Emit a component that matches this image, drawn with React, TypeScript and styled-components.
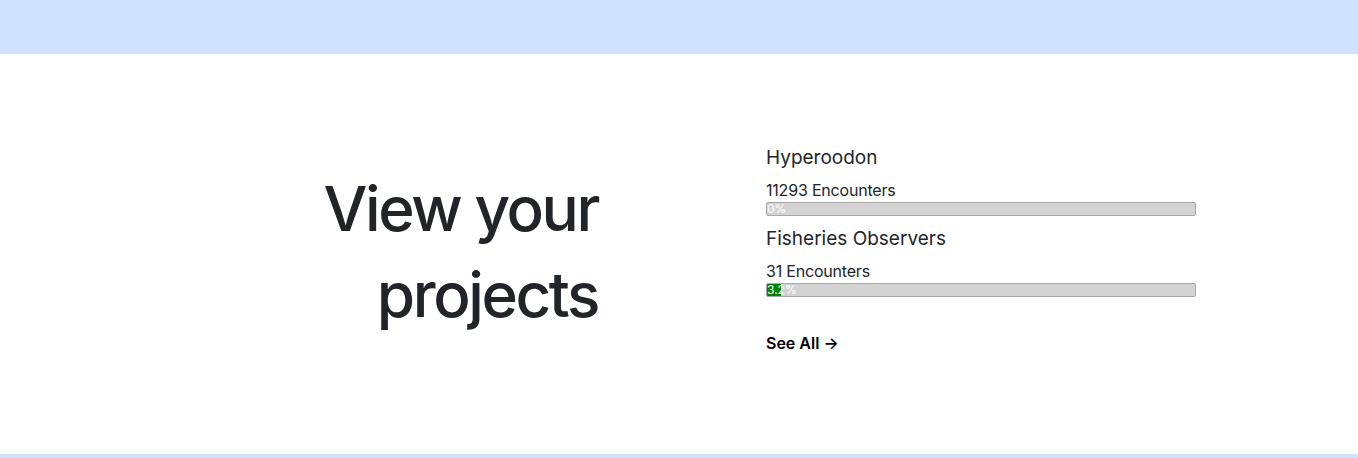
import React from 'react';
import styled, { createGlobalStyle } from 'styled-components';

const GlobalStyle = createGlobalStyle`
  * { box-sizing: border-box; }
  body {
    margin: 0;
    font-family: Inter, "Noto Sans", "Liberation Sans", sans-serif;
    color: #212529;
    background: #fff;
  }
`;

const TopBar = styled.div`
  height: 54px;
  background-color: #cfe2ff;
`;

const Hero = styled.section`
  height: 400px;
  display: flex;
  align-items: center;
`;

const HeroLeft = styled.div`
  width: 598px;
  text-align: right;
`;

const HeroTitle = styled.h1`
  margin: 0 0 4px 0;
  font-size: 62px;
  font-weight: 500;
  line-height: 86px;
  letter-spacing: -2.4px;
`;

const HeroRight = styled.div`
  margin-left: 168px;
  margin-bottom: 8px;
  width: 430px;
  display: flex;
  flex-direction: column;
`;

const ProjectName = styled.h5`
  margin: 0 0 8px 0;
  font-size: 19px;
  font-weight: 400;
  line-height: 24px;
`;

const Count = styled.div`
  font-size: 16px;
  line-height: 24px;
  letter-spacing: -0.2px;
`;

const Bar = styled.div`
  position: relative;
  height: 14px;
  margin-bottom: 11px;
  background-color: #d3d3d3;
  border: 1px solid #a8a8a8;
  border-radius: 2px;
  overflow: hidden;
`;

const Fill = styled.div`
  height: 100%;
  background-color: #008000;
`;

const BarLabel = styled.span`
  position: absolute;
  left: 0;
  top: -1px;
  font-size: 12px;
  line-height: 14px;
  color: #fff;
`;

const SeeAll = styled.a`
  margin-top: 23px;
  font-size: 16px;
  line-height: 24px;
  font-weight: 600;
  color: #000;
  text-decoration: none;
`;

const BottomBar = styled.div`
  height: 4px;
  background-color: #cfe2ff;
`;

const projects = [
  { name: 'Hyperoodon', count: 11293, pct: 0 },
  { name: 'Fisheries Observers', count: 31, pct: 3.2 },
];

export default function App() {
  return (
    <>
      <GlobalStyle />
      <TopBar />
      <Hero>
        <HeroLeft>
          <HeroTitle>
            View your
            <br />
            projects
          </HeroTitle>
        </HeroLeft>
        <HeroRight>
          {projects.map(p => (
            <div key={p.name}>
              <ProjectName>{p.name}</ProjectName>
              <Count>{p.count} Encounters</Count>
              <Bar>
                <Fill style={{ width: `${p.pct}%` }} />
                <BarLabel>{p.pct}%</BarLabel>
              </Bar>
            </div>
          ))}
          <SeeAll href="#">See All →</SeeAll>
        </HeroRight>
      </Hero>
      <BottomBar />
    </>
  );
}
